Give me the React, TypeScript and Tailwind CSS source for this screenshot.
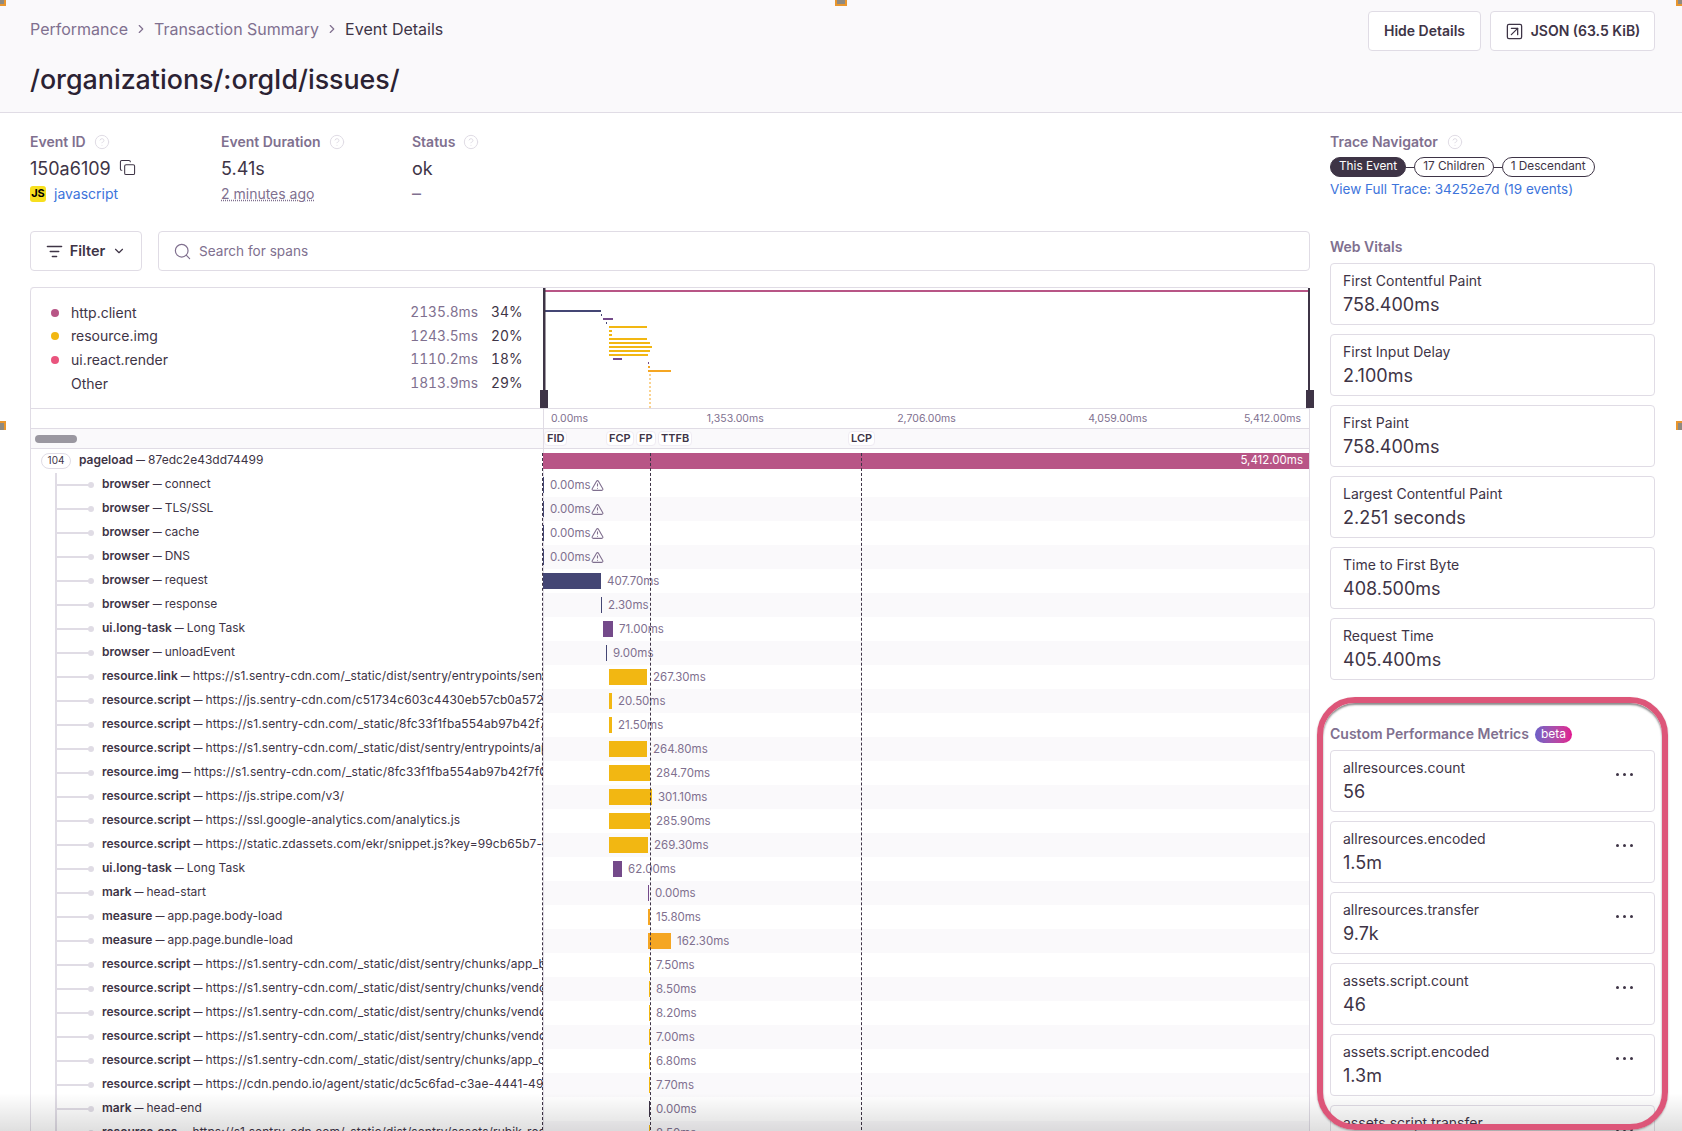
import {
  ChevronDown,
  ChevronRight,
  CircleHelp,
  Copy,
  ListFilter,
  Search,
  SquareArrowUpRight,
  TriangleAlert,
} from 'lucide-react'

type Span = {
  op: string
  desc: string
  left?: number
  width?: number
  color?: string
  label?: string
  gap?: number
  warn?: boolean
}

const BLUE = '#444674'
const PURPLE = '#744a8a'
const YELLOW = '#f2b712'
const ORANGE = '#f5a623'
const CDN = 'https://s1.sentry-cdn.com/_static/'

const spans: Span[] = [
  { op: 'browser', desc: 'connect', left: 0, width: 1, color: BLUE, label: '0.00ms', warn: true },
  { op: 'browser', desc: 'TLS/SSL', left: 0, width: 1, color: BLUE, label: '0.00ms', warn: true },
  { op: 'browser', desc: 'cache', left: 0, width: 1, color: BLUE, label: '0.00ms', warn: true },
  { op: 'browser', desc: 'DNS', left: 0, width: 1, color: BLUE, label: '0.00ms', warn: true },
  { op: 'browser', desc: 'request', left: 0, width: 58, color: BLUE, label: '407.70ms' },
  { op: 'browser', desc: 'response', left: 58, width: 1, color: BLUE, label: '2.30ms' },
  { op: 'ui.long-task', desc: 'Long Task', left: 60, width: 10, color: PURPLE, label: '71.00ms' },
  { op: 'browser', desc: 'unloadEvent', left: 63, width: 1, color: BLUE, label: '9.00ms' },
  { op: 'resource.link', desc: CDN + 'dist/sentry/entrypoints/sentry.css', left: 66, width: 38, color: YELLOW, label: '267.30ms' },
  { op: 'resource.script', desc: 'https://js.sentry-cdn.com/c51734c603c4430eb57cb0a5728ec4f1.min.js', left: 66, width: 3, color: YELLOW, label: '20.50ms' },
  { op: 'resource.script', desc: CDN + '8fc33f1fba554ab97b42f7f0e1a2b3c4/sentry/js/ads.js', left: 66, width: 3, color: YELLOW, label: '21.50ms' },
  { op: 'resource.script', desc: CDN + 'dist/sentry/entrypoints/app.js', left: 66, width: 38, color: YELLOW, label: '264.80ms' },
  { op: 'resource.img', desc: CDN + '8fc33f1fba554ab97b42f7f0e1a2b3c4/sentry/images/logo.svg', left: 66, width: 41, color: YELLOW, label: '284.70ms' },
  { op: 'resource.script', desc: 'https://js.stripe.com/v3/', left: 66, width: 43, color: YELLOW, label: '301.10ms' },
  { op: 'resource.script', desc: 'https://ssl.google-analytics.com/analytics.js', left: 66, width: 41, color: YELLOW, label: '285.90ms' },
  { op: 'resource.script', desc: 'https://static.zdassets.com/ekr/snippet.js?key=99cb65b7-16aa-4bb1', left: 66, width: 39, color: YELLOW, label: '269.30ms' },
  { op: 'ui.long-task', desc: 'Long Task', left: 70, width: 9, color: PURPLE, label: '62.00ms' },
  { op: 'mark', desc: 'head-start', left: 105, width: 1, color: PURPLE, label: '0.00ms' },
  { op: 'measure', desc: 'app.page.body-load', left: 105, width: 2, color: ORANGE, label: '15.80ms' },
  { op: 'measure', desc: 'app.page.bundle-load', left: 105, width: 23, color: ORANGE, label: '162.30ms' },
  { op: 'resource.script', desc: CDN + 'dist/sentry/chunks/app_bootstrap.js', left: 106, width: 1, color: YELLOW, label: '7.50ms' },
  { op: 'resource.script', desc: CDN + 'dist/sentry/chunks/vendors-node_modules.js', left: 106, width: 1, color: YELLOW, label: '8.50ms' },
  { op: 'resource.script', desc: CDN + 'dist/sentry/chunks/vendors-node_modules.js', left: 106, width: 1, color: YELLOW, label: '8.20ms' },
  { op: 'resource.script', desc: CDN + 'dist/sentry/chunks/vendors-node_modules.js', left: 106, width: 1, color: YELLOW, label: '7.00ms' },
  { op: 'resource.script', desc: CDN + 'dist/sentry/chunks/app_components.js', left: 106, width: 1, color: YELLOW, label: '6.80ms' },
  { op: 'resource.script', desc: 'https://cdn.pendo.io/agent/static/dc5c6fad-c3ae-4441-49c0-7c1b2a9f', left: 106, width: 1, color: YELLOW, label: '7.70ms' },
  { op: 'mark', desc: 'head-end', left: 106, width: 1, color: '#3e3446', label: '0.00ms' },
  { op: 'resource.css', desc: CDN + 'dist/sentry/assets/rubik-regular.css', left: 106, width: 1, color: YELLOW, label: '8.50ms' },
]

const legend = [
  { name: 'http.client', ms: '2135.8ms', pct: '34%', dot: 'bg-[#b85586]' },
  { name: 'resource.img', ms: '1243.5ms', pct: '20%', dot: 'bg-[#f2b712]' },
  { name: 'ui.react.render', ms: '1110.2ms', pct: '18%', dot: 'bg-[#e9547d]' },
  { name: 'Other', ms: '1813.9ms', pct: '29%', dot: '' },
]

const vitals = [
  ['First Contentful Paint', '758.400ms'],
  ['First Input Delay', '2.100ms'],
  ['First Paint', '758.400ms'],
  ['Largest Contentful Paint', '2.251 seconds'],
  ['Time to First Byte', '408.500ms'],
  ['Request Time', '405.400ms'],
]

const customMetrics = [
  ['allresources.count', '56'],
  ['allresources.encoded', '1.5m'],
  ['allresources.transfer', '9.7k'],
  ['assets.script.count', '46'],
  ['assets.script.encoded', '1.3m'],
  ['assets.script.transfer', '1.2m'],
]

// minimap bars: [y, x1, x2, colour]
const minimap: [number, number, number, string][] = [
  [22, 2, 58, BLUE],
  [26, 58, 59, BLUE],
  [30, 60, 70, PURPLE],
  [34, 63, 64, BLUE],
  [38, 66, 104, YELLOW],
  [42, 66, 69, YELLOW],
  [46, 66, 69, YELLOW],
  [50, 66, 104, YELLOW],
  [54, 66, 107, YELLOW],
  [58, 66, 109, YELLOW],
  [62, 66, 107, YELLOW],
  [66, 66, 105, YELLOW],
  [70, 70, 79, PURPLE],
  [74, 105, 106, PURPLE],
  [78, 105, 107, ORANGE],
  [82, 105, 128, ORANGE],
]

function Help() {
  return <CircleHelp size={16} strokeWidth={1.5} className="text-[#e0dce5]" />
}

function Label({ children }: { children: React.ReactNode }) {
  return <span className="text-sm font-semibold text-[#80708f]">{children}</span>
}

function Breadcrumb() {
  return (
    <div className="flex items-center gap-[6px] text-base text-[#80708f]">
      <span>Performance</span>
      <ChevronRight size={14} />
      <span>Transaction Summary</span>
      <ChevronRight size={14} />
      <span className="text-[#3e3446]">Event Details</span>
    </div>
  )
}

function MetaBlock({ title, value, sub, width }: { title: string; value: React.ReactNode; sub: React.ReactNode; width: string }) {
  return (
    <div className={width}>
      <div className="flex h-5 items-center gap-[8px]">
        <Label>{title}</Label>
        <Help />
      </div>
      <div className="mt-[4px] flex h-[26px] items-center text-lg text-[#3e3446]">{value}</div>
      <div className="mt-[2px] flex h-5 items-center text-sm">{sub}</div>
    </div>
  )
}

function Pill({ children, active }: { children: React.ReactNode; active?: boolean }) {
  return (
    <span
      className={`flex h-5 items-center rounded-full border border-[#3e3446] px-[8px] text-[11.8px] ${
        active ? 'bg-[#3e3446] text-white' : 'bg-white text-[#3e3446]'
      }`}
    >
      {children}
    </span>
  )
}

function MetricCard({ name, value, menu }: { name: string; value: string; menu?: boolean }) {
  return (
    <div className="relative h-[62px] shrink-0 rounded border border-[#e0dce5] bg-white px-[12px] pt-[7px]">
      <div className="text-sm leading-5 text-[#3e3446]">{name}</div>
      <div className="mt-[2px] text-lg leading-6 text-[#3e3446]">{value}</div>
      {menu && (
        <div className="absolute right-[21px] top-[22px] flex gap-[4px]">
          <span className="h-[3px] w-[3px] rounded-full bg-[#3e3446]" />
          <span className="h-[3px] w-[3px] rounded-full bg-[#3e3446]" />
          <span className="h-[3px] w-[3px] rounded-full bg-[#3e3446]" />
        </div>
      )}
    </div>
  )
}

function TreeStub() {
  return (
    <div className="relative h-full w-[71px] shrink-0">
      <div className="absolute bottom-0 left-[24px] top-0 w-[2px] bg-[#e0dce5]" />
      <div className="absolute left-[26px] top-[11px] h-[2px] w-[34px] bg-[#e0dce5]" />
      <div className="absolute left-[57px] top-[9px] h-[6px] w-[6px] rounded-full bg-[#e0dce5]" />
    </div>
  )
}

function SpanName({ op, desc }: { op: string; desc: string }) {
  return (
    <span className="flex items-center pb-[2px]">
      <span className="font-semibold">{op}</span>
      <span className="mx-[3px] text-[9px] font-bold">—</span>
      <span className={desc.startsWith('http') ? 'tracking-[0.1px]' : ''}>{desc}</span>
    </span>
  )
}

function SpanRow({ span, alt }: { span: Span; alt: boolean }) {
  return (
    <div className="flex h-6">
      <div className="flex h-full w-[513px] shrink-0 items-center overflow-hidden whitespace-nowrap border-l border-[#e0dce5] text-xs text-[#3e3446]">
        <TreeStub />
        <SpanName op={span.op} desc={span.desc} />
      </div>
      <div className={`flex h-full flex-1 items-center border-l border-r border-[#e0dce5] ${alt ? 'bg-[#faf9fb]' : 'bg-white'}`}>
        <div className="h-4 shrink-0" style={{ marginLeft: (span.left ?? 0) - 1, width: span.width, backgroundColor: span.color }} />
        <span className="ml-[6px] pt-[1px] text-[11.5px] text-[#80708f]">{span.label}</span>
        {span.warn && <TriangleAlert size={13} className="text-[#80708f]" />}
      </div>
    </div>
  )
}

function Marker({ label, className }: { label: string; className: string }) {
  return (
    <span className={`absolute top-[2px] flex h-[15px] items-center rounded border border-[#f0ecf3] bg-white px-[2px] text-[11px] font-semibold text-[#3e3446] ${className}`}>
      {label}
    </span>
  )
}

function Minimap() {
  return (
    <svg viewBox="0 0 767 120" width={767} height={120} className="block">
      <rect x="2" y="2" width="765" height="2" fill="#b85586" />
      {minimap.map(([y, x1, x2, c], i) => (
        <rect key={i} x={x1} y={y} width={x2 - x1} height="2" fill={c} />
      ))}
      <line x1="107" y1="86" x2="107" y2="120" stroke={ORANGE} strokeDasharray="2 2" />
      <line x1="1" y1="0" x2="1" y2="120" stroke="#3e3446" strokeWidth="3" />
      <line x1="766" y1="0" x2="766" y2="120" stroke="#3e3446" strokeWidth="2" />
    </svg>
  )
}

function SpanPanel() {
  return (
    <div className="relative mt-[16px] rounded-t border-t border-[#e0dce5]">
      <div className="flex h-[120px]">
        <div className="w-[513px] shrink-0 rounded-tl border-l border-[#e0dce5] pl-[20px] pr-[23px] pt-[13px]">
          {legend.map((l) => (
            <div key={l.name} className="flex h-[23.6px] items-center text-sm">
              <span className={`h-2 w-2 rounded-full ${l.dot}`} />
              <span className="ml-[12px] flex-1 text-[#3e3446]">{l.name}</span>
              <span className="text-[13.8px] tabular-nums text-[#80708f]">{l.ms}</span>
              <span className="ml-[13px] w-[29px] text-right text-[13.8px] tabular-nums text-[#3e3446]">{l.pct}</span>
            </div>
          ))}
        </div>
        <Minimap />
      </div>
      {/* minimap drag handles */}
      <div className="absolute left-[510px] top-[102px] h-[18px] w-2 bg-[#3e3446]" />
      <div className="absolute right-[-4px] top-[102px] h-[18px] w-2 bg-[#3e3446]" />

      <div className="flex h-[20px] border-t border-[#e0dce5]">
        <div className="w-[513px] shrink-0 border-l border-[#e0dce5]" />
        <div className="relative flex-1 border-l border-r border-[#e0dce5] text-[10.5px] text-[#80708f]">
          <span className="absolute left-[7px] top-[2px]">0.00ms</span>
          <span className="absolute left-1/4 top-[2px] -translate-x-1/2">1,353.00ms</span>
          <span className="absolute left-2/4 top-[2px] -translate-x-1/2">2,706.00ms</span>
          <span className="absolute left-3/4 top-[2px] -translate-x-1/2">4,059.00ms</span>
          <span className="absolute right-[8px] top-[2px]">5,412.00ms</span>
        </div>
      </div>

      <div className="flex h-[21px] border-y border-[#e0dce5] bg-[#faf9fb]">
        <div className="flex w-[513px] shrink-0 items-center border-l border-[#e0dce5] pl-[4px]">
          <div className="h-2 w-[42px] rounded-full bg-[#9a97a0]" />
        </div>
        <div className="relative flex-1 border-l border-r border-[#e0dce5]">
          <Marker label="FID" className="left-[0px]" />
          <Marker label="FCP" className="left-[62px]" />
          <Marker label="FP" className="left-[92px]" />
          <Marker label="TTFB" className="left-[114px]" />
          <Marker label="LCP" className="left-[304px]" />
        </div>
      </div>

      <div className="relative">
        <div className="flex h-6">
          <div className="flex h-full w-[513px] shrink-0 items-center overflow-hidden whitespace-nowrap border-l border-[#e0dce5] text-xs text-[#3e3446]">
            <span className="ml-[10px] mr-[8px] flex h-4 w-[30px] items-center justify-center rounded-full border border-[#e0dce5] bg-white text-[10px]">104</span>
            <SpanName op="pageload" desc="87edc2e43dd74499" />
          </div>
          <div className="flex h-full flex-1 items-center border-l border-r border-[#e0dce5]">
            <div className="-ml-px flex h-4 flex-1 items-center justify-end bg-[#b85586] pr-[6px] text-[11.5px] text-white">5,412.00ms</div>
          </div>
        </div>
        {spans.map((s, i) => (
          <SpanRow key={i} span={s} alt={i % 2 === 1} />
        ))}
        {/* web vital guide lines */}
        <div className="absolute bottom-0 left-[512px] top-[4px] border-l border-dashed border-[#3e3446]" />
        <div className="absolute bottom-0 left-[620px] top-[4px] border-l border-dashed border-[#3e3446]" />
        <div className="absolute bottom-0 left-[831px] top-[4px] border-l border-dashed border-[#3e3446]" />
      </div>
    </div>
  )
}

export default function App() {
  return (
    <div className="relative h-[1131px] overflow-hidden bg-white font-['Inter',sans-serif]">
      <header className="flex h-[113px] justify-between border-b border-[#e0dce5] bg-[#faf9fb] pl-[30px] pr-[27px]">
        <div className="pt-[17px]">
          <Breadcrumb />
          <h1 className="mt-[22px] text-[26.8px] font-medium leading-8 text-[#2b2233]">/organizations/:orgId/issues/</h1>
        </div>
        <div className="flex gap-[9px] pt-[11px]">
          <button className="flex h-10 w-[113px] items-center justify-center rounded border border-[#e0dce5] bg-white text-sm font-semibold text-[#3e3446]">Hide Details</button>
          <button className="flex h-10 w-[165px] items-center justify-center gap-[7px] rounded border border-[#e0dce5] bg-white text-sm font-semibold text-[#3e3446]">
            <SquareArrowUpRight size={19} strokeWidth={1.6} />
            JSON (63.5 KiB)
          </button>
        </div>
      </header>

      <div className="flex gap-[20px] pl-[30px] pr-[27px]">
        <main className="w-[1280px] shrink-0 pt-[19px]">
          <div className="flex h-[99px]">
            <MetaBlock
              width="w-[191px]"
              title="Event ID"
              value={
                <span className="flex items-center gap-[8px]">
                  150a6109 <Copy size={17} strokeWidth={1.5} className="-mt-[3px]" />
                </span>
              }
              sub={
                <span className="flex items-center gap-[8px] text-[#3d74db]">
                  <span className="flex h-4 w-4 items-center justify-center rounded-[3px] bg-[#f7df1e] text-[11px] font-bold text-black">JS</span>
                  javascript
                </span>
              }
            />
            <MetaBlock
              width="w-[191px]"
              title="Event Duration"
              value="5.41s"
              sub={<span className="text-[#80708f] underline decoration-dotted">2 minutes ago</span>}
            />
            <MetaBlock width="w-[191px]" title="Status" value="ok" sub={<span className="text-lg text-[#80708f]">–</span>} />
          </div>

          <div className="flex h-10 gap-[16px]">
            <button className="flex w-[112px] items-center justify-center gap-[7px] rounded border border-[#e0dce5] bg-white text-[14.5px] font-semibold text-[#3e3446]">
              <ListFilter size={17} />
              Filter
              <ChevronDown size={14} />
            </button>
            <div className="flex flex-1 items-center gap-[7px] rounded border border-[#e0dce5] bg-white px-[14px] text-[13.6px] text-[#80708f]">
              <Search size={19} strokeWidth={1.5} />
              Search for spans
            </div>
          </div>

          <SpanPanel />
        </main>

        <aside className="w-[325px] shrink-0 pt-[19px]">
          <div className="flex h-5 items-center gap-[9px]">
            <Label>Trace Navigator</Label>
            <Help />
          </div>
          <div className="mt-[5px] flex items-center">
            <Pill active>This Event</Pill>
            <span className="h-px w-[8px] bg-[#3e3446]" />
            <Pill>17 Children</Pill>
            <span className="h-px w-[8px] bg-[#3e3446]" />
            <Pill>1 Descendant</Pill>
          </div>
          <div className="mt-[2px] text-[13.5px] leading-5 text-[#3d74db]">View Full Trace: 34252e7d (19 events)</div>

          <div className="mt-[38px] flex h-5 items-center">
            <Label>Web Vitals</Label>
          </div>
          <div className="mt-[6px] flex flex-col gap-[9px]">
            {vitals.map(([n, v]) => (
              <MetricCard key={n} name={n} value={v} />
            ))}
          </div>

          <div className="mt-[44px] flex h-5 items-center gap-[6px]">
            <Label>Custom Performance Metrics</Label>
            <span className="flex h-[17px] items-center rounded-full bg-gradient-to-r from-[#6c5fc7] to-[#e1128f] px-[6px] text-xs text-white">beta</span>
          </div>
          <div className="mt-[6px] flex flex-col gap-[9px]">
            {customMetrics.map(([n, v]) => (
              <MetricCard key={n} name={n} value={v} menu />
            ))}
          </div>
        </aside>
      </div>

      {/* screen recording fade along the bottom */}
      <div className="pointer-events-none absolute inset-x-0 bottom-0 h-[38px] bg-gradient-to-b from-transparent to-[#00000020]" />

      {/* annotation ring round the custom metrics */}
      <div className="pointer-events-none absolute left-[1317px] top-[697px] h-[433px] w-[351px] rounded-[38px] border-[6px] border-[#dd5679] shadow-[inset_0_2px_2px_rgba(0,0,0,0.45),0_1px_2px_rgba(0,0,0,0.3)]" />

      {/* crop handles from the original capture */}
      <div className="absolute left-0 top-0 h-[6px] w-[6px] border-b-2 border-r-2 border-[#e8962e] bg-[#8f8a80]" />
      <div className="absolute left-[835px] top-0 h-[6px] w-3 border-x-2 border-b-2 border-[#e8962e] bg-[#8f8a80]" />
      <div className="absolute right-0 top-0 h-[6px] w-[6px] border-b-2 border-l-2 border-[#e8962e] bg-[#8f8a80]" />
      <div className="absolute left-0 top-[421px] h-[9px] w-[6px] border-r-2 border-t-2 border-[#e8962e] bg-[#8f8a80]" />
      <div className="absolute right-0 top-[421px] h-[9px] w-[6px] border-l-2 border-t-2 border-[#e8962e] bg-[#8f8a80]" />
    </div>
  )
}
